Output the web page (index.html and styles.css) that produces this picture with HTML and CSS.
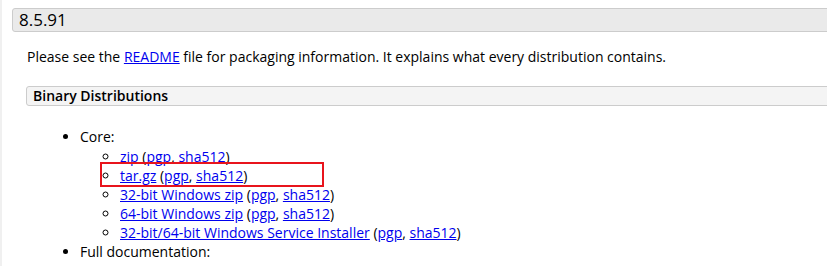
FILE: index.html
```html
<!DOCTYPE html>
<html lang="en">
  <head>
    <meta charset="UTF-8" />
    <meta name="viewport" content="width=device-width, initial-scale=1.0" />
    <title>Tomcat 8 Downloads</title>
    <link rel="stylesheet" href="styles.css">
  </head>
  <body>
    <div class="content">
      <!-- Release heading -->
      <h3 class="release">8.5.91</h3>

      <div class="section">
        <p>
          Please see the <a href="#">README</a> file for packaging information.
          It explains what every distribution contains.
        </p>

        <h4 class="sub">Binary Distributions</h4>

        <ul class="dist">
          <li>
            Core:
            <ul>
              <li><a href="#">zip</a> (<a href="#">pgp</a>, <a href="#">sha512</a>)</li>
              <li class="marked"><a href="#">tar.gz</a> (<a href="#">pgp</a>, <a href="#">sha512</a>)</li>
              <li><a href="#">32-bit Windows zip</a> (<a href="#">pgp</a>, <a href="#">sha512</a>)</li>
              <li><a href="#">64-bit Windows zip</a> (<a href="#">pgp</a>, <a href="#">sha512</a>)</li>
              <li><a href="#">32-bit/64-bit Windows Service Installer</a> (<a href="#">pgp</a>, <a href="#">sha512</a>)</li>
            </ul>
          </li>
          <li>
            Full documentation:
            <ul>
              <li><a href="#">tar.gz</a> (<a href="#">pgp</a>, <a href="#">sha512</a>)</li>
            </ul>
          </li>
        </ul>
      </div>
    </div>
  </body>
</html>
```

FILE: styles.css
```css
/* Page base */
body {
  margin: 0;
  font-family: "Open Sans", "Liberation Sans", sans-serif;
  font-size: 14px;
  line-height: 19px;
  color: #000;
  background: #fff;
  overflow: hidden;
}

.content {
  border-left: 2px solid #f0f0f0;
  padding: 8px 0 0 10px;
  min-height: 266px;
  box-sizing: border-box;
}

a {
  color: #0000ee;
}

/* Version heading */
.release {
  margin: 0;
  width: calc(100% + 40px);
  height: 24px;
  box-sizing: border-box;
  padding: 0 0 0 6px;
  font-size: 17px;
  font-weight: normal;
  line-height: 22px;
  background: #eaeaea;
  border: 1px solid #ccc;
  border-radius: 3px;
}

.section {
  padding-left: 14px;
}

.section p {
  margin: 15px 0 0 1px;
}

/* Sub heading */
.sub {
  margin: 20px 0 0 0;
  width: calc(100% + 40px);
  height: 20px;
  box-sizing: border-box;
  padding: 0 0 0 6px;
  font-size: 14px;
  font-weight: 600;
  line-height: 18px;
  background: #f4f4f4;
  border: 1px solid #ccc;
  border-radius: 3px;
}

/* Lists */
.dist {
  margin: 21px 0 0 0;
  padding-left: 54px;
}

.dist ul {
  margin: 1px 0 0 0;
  padding-left: 40px;
  list-style-type: circle;
}

/* Red highlight box drawn over the row */
.marked {
  position: relative;
}

.marked::after {
  content: "";
  position: absolute;
  left: -20px;
  top: -4px;
  width: 220px;
  height: 21px;
  border: 2px solid #e8141c;
}
```
